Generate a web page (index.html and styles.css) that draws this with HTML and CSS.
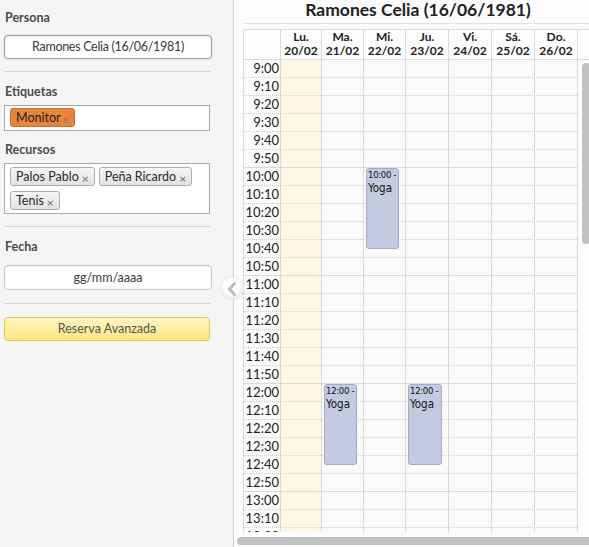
FILE: index.html
```html
<!DOCTYPE html>
<html lang="es">
<head>
<meta charset="utf-8">
<title>Reservas</title>
<link rel="stylesheet" href="styles.css">
</head>
<body>
<div class="app">
  <aside class="sidebar">
    <div class="label">Persona</div>
    <div class="input input-persona">Ramones Celia (16/06/1981)</div>
    <div class="divider"></div>
    <div class="label label-sec">Etiquetas</div>
    <div class="tagbox tagbox-one">
      <span class="tag tag-orange">Monitor<span class="x">×</span></span>
    </div>
    <div class="label label-rec">Recursos</div>
    <div class="tagbox tagbox-two">
      <span class="tag">Palos Pablo<span class="x">×</span></span>
      <span class="tag">Peña Ricardo<span class="x">×</span></span>
      <span class="tag">Tenis<span class="x">×</span></span>
    </div>
    <div class="divider"></div>
    <div class="label label-sec">Fecha</div>
    <div class="input input-fecha">gg/mm/aaaa</div>
    <div class="divider divider-last"></div>
    <div class="button">Reserva Avanzada</div>
    <div class="collapse"><svg width="12" height="14" viewBox="0 0 12 14"><path d="M8.5 1.5 L3.5 7 L8.5 12.5" fill="none" stroke="#bdbdbd" stroke-width="3" stroke-linecap="round" stroke-linejoin="round"/></svg></div>
  </aside>
  <main class="cal">
    <div class="cal-title">Ramones Celia (16/06/1981)</div>
    <div class="scroll">
      <div class="table">
        <div class="thead">
          <div class="th th-time"></div>
          <div class="th w41">Lu.<br>20/02</div>
          <div class="th w42">Ma.<br>21/02</div>
          <div class="th w42">Mi.<br>22/02</div>
          <div class="th w43">Ju.<br>23/02</div>
          <div class="th w43">Vi.<br>24/02</div>
          <div class="th w43">Sá.<br>25/02</div>
          <div class="th w43">Do.<br>26/02</div>
          <div class="th th-gutter"></div>
        </div>
        <div class="tbody">
          <div class="layer cols">
            <div class="col col-time"></div>
            <div class="col w41 today"></div>
            <div class="col w42">
              <div class="event ev-12"><span class="ev-time">12:00 -</span><span class="ev-name">Yoga</span></div>
            </div>
            <div class="col w42">
              <div class="event ev-10"><span class="ev-time">10:00 -</span><span class="ev-name">Yoga</span></div>
            </div>
            <div class="col w43">
              <div class="event ev-12 ev-wide"><span class="ev-time">12:00 -</span><span class="ev-name">Yoga</span></div>
            </div>
            <div class="col w43"></div>
            <div class="col w43"></div>
            <div class="col w43"></div>
            <div class="gutter"><div class="vthumb"></div></div>
          </div>
          <div class="layer rows">
            <div class="row"><span class="t">9:00</span></div>
            <div class="row"><span class="t">9:10</span></div>
            <div class="row"><span class="t">9:20</span></div>
            <div class="row"><span class="t">9:30</span></div>
            <div class="row"><span class="t">9:40</span></div>
            <div class="row hour"><span class="t">9:50</span></div>
            <div class="row"><span class="t">10:00</span></div>
            <div class="row"><span class="t">10:10</span></div>
            <div class="row"><span class="t">10:20</span></div>
            <div class="row"><span class="t">10:30</span></div>
            <div class="row"><span class="t">10:40</span></div>
            <div class="row hour"><span class="t">10:50</span></div>
            <div class="row"><span class="t">11:00</span></div>
            <div class="row"><span class="t">11:10</span></div>
            <div class="row"><span class="t">11:20</span></div>
            <div class="row"><span class="t">11:30</span></div>
            <div class="row"><span class="t">11:40</span></div>
            <div class="row hour"><span class="t">11:50</span></div>
            <div class="row"><span class="t">12:00</span></div>
            <div class="row"><span class="t">12:10</span></div>
            <div class="row"><span class="t">12:20</span></div>
            <div class="row"><span class="t">12:30</span></div>
            <div class="row"><span class="t">12:40</span></div>
            <div class="row hour"><span class="t">12:50</span></div>
            <div class="row"><span class="t">13:00</span></div>
            <div class="row"><span class="t">13:10</span></div>
            <div class="row"><span class="t">13:20</span></div>
          </div>
        </div>
      </div>
      <div class="hscroll"><div class="hthumb"></div></div>
    </div>
  </main>
</div>
</body>
</html>
```
FILE: styles.css
```css
html, body {
  margin: 0;
  padding: 0;
}
body {
  font-family: Lato, "Open Sans", sans-serif;
  font-size: 12px;
  color: #333;
  background: #fcfcfc;
}
.app {
  display: flex;
  width: 589px;
  height: 547px;
  overflow: hidden;
}

/* Sidebar */
.sidebar {
  position: relative;
  width: 229px;
  flex: none;
  background: #f5f5f5;
  border-right: 1px solid #cfcfcf;
  padding: 10px 0 0 4px;
  box-sizing: content-box;
}
.sidebar > * { box-sizing: border-box; }
.label {
  font-weight: bold;
  color: #4c4c4c;
  font-size: 12.5px;
  line-height: 16px;
  padding-left: 1px;
  height: 16px;
}
.label-sec { margin-top: 12px; }
.label-rec { margin-top: 11px; }
.input {
  background: #fff;
  border: 1px solid #b4b4b4;
  border-radius: 4px;
  text-align: center;
  color: #3a3a3a;
  font-size: 12.5px;
  letter-spacing: -0.3px;
  width: 208px;
  box-shadow: inset 0 1px 2px rgba(0,0,0,0.08);
}
.input-persona {
  margin-top: 9px;
  height: 24px;
  line-height: 22px;
  border-color: #9da3a8;
  box-shadow: 0 0 2px rgba(90,100,110,0.35), inset 0 1px 2px rgba(0,0,0,0.08);
}
.input-fecha {
  margin-top: 10px;
  height: 25px;
  line-height: 23px;
  border-color: #c6c6c6;
  letter-spacing: 0;
}
.divider {
  width: 206px;
  height: 1px;
  background: #d6d6d6;
  margin-top: 12px;
}
.divider-last { margin-top: 13px; }
.tagbox {
  margin-top: 5px;
  width: 206px;
  background: #fff;
  border: 1px solid #a9a9a9;
  padding: 2px 4px 0 5px;
  display: flex;
  flex-wrap: wrap;
  gap: 5px 4px;
  align-content: flex-start;
}
.tagbox-one { height: 26px; }
.tagbox-two { height: 51px; padding-top: 3px; }
.tag {
  display: inline-flex;
  align-items: center;
  height: 19px;
  padding: 0 5px 0 5px;
  border: 1px solid #adadad;
  border-radius: 3px;
  background: linear-gradient(#f6f6f6, #e2e2e2);
  color: #2a2a2a;
  font-size: 12.5px;
  box-sizing: border-box;
}
.tag-orange {
  background: #ea843c;
  border-color: #c5702f;
  color: #1e1e1e;
  padding-right: 4px;
}
.x {
  font-size: 12px;
  font-weight: bold;
  color: #858585;
  margin-left: 3px;
  line-height: 1;
  position: relative;
  top: 2px;
}
.tag-orange .x { color: #9a7e6a; margin-left: 2px; }
.button {
  margin-top: 13px;
  width: 206px;
  height: 24px;
  line-height: 22px;
  text-align: center;
  border: 1px solid #ecc64f;
  border-radius: 4px;
  background: linear-gradient(#fff5c2, #fde57f);
  color: #555;
  font-size: 12.5px;
}
.collapse {
  position: absolute;
  left: 221px;
  top: 277px;
  width: 23px;
  height: 23px;
  border-radius: 50%;
  background: radial-gradient(circle at 45% 40%, #ffffff 35%, #e6e6e6 80%, #d2d2d2 100%);
  box-shadow: 0 0 1px rgba(0,0,0,0.25);
  display: flex;
  align-items: center;
  justify-content: center;
  z-index: 5;
}
.collapse svg { margin-left: -2px; }

/* Calendar */
.cal {
  flex: 1;
  display: flex;
  flex-direction: column;
  min-width: 0;
  background: #fcfcfc;
}
.cal-title {
  margin-left: 9px;
  height: 24px;
  box-sizing: border-box;
  border-bottom: 1px solid #e4e4e4;
  text-align: center;
  font-weight: bold;
  font-size: 17.5px;
  line-height: 20px;
  color: #222;
  padding-left: 4px;
  flex: none;
}
.scroll {
  margin-top: 5px;
  flex: 1;
  display: flex;
  flex-direction: column;
  min-height: 0;
}
.table {
  margin-left: 9px;
  flex: 1;
  display: flex;
  flex-direction: column;
  min-height: 0;
  overflow: hidden;
  border-top: 1px solid #dadada;
}
.thead {
  display: flex;
  height: 29px;
  flex: none;
  border-bottom: 1px solid #dadada;
  background: #fcfcfc;
}
.th {
  box-sizing: border-box;
  border-right: 1px solid #dadada;
  text-align: center;
  font-weight: bold;
  font-size: 12px;
  line-height: 14px;
  padding-top: 0;
  color: #222;
}
.th-time { width: 38px; border-left: 1px solid #dadada; }
.th-gutter { flex: 1; border-right: none; }
.w41 { width: 41px; }
.w42 { width: 42px; }
.w43 { width: 43px; }

.tbody {
  flex: 1;
  min-height: 0;
  display: grid;
  overflow: hidden;
  background: #fafafa;
}
.layer { grid-area: 1 / 1; }
.cols { display: flex; }
.col {
  box-sizing: border-box;
  border-right: 1px solid #dadada;
  display: flex;
  flex-direction: column;
  align-items: flex-start;
}
.col-time { width: 38px; border-left: 1px solid #dadada; }
.today { background: #fdf7e4; }
.gutter {
  flex: 1;
  background: #fcfcfc;
  position: relative;
  z-index: 3;
}
.vthumb {
  margin-top: 3px;
  margin-left: 4px;
  width: 8px;
  height: 181px;
  border-radius: 4px;
  background: #c2c2c2;
}
.rows { display: flex; flex-direction: column; }
.row {
  height: 18px;
  flex: none;
  box-sizing: border-box;
  border-bottom: 1px dotted #cfcfcf;
  margin-right: 11px;
  display: flex;
  align-items: center;
}
.row.hour { border-bottom: 1px solid #dadada; }
.t {
  width: 36px;
  text-align: right;
  font-size: 13px;
  color: #222;
  line-height: 17px;
}
.event {
  position: relative;
  z-index: 2;
  margin-left: 2px;
  width: 33px;
  height: 81px;
  box-sizing: border-box;
  background: #c4cbe1;
  border: 1px solid #a2acc9;
  border-radius: 3px;
  padding: 0 0 0 1px;
  overflow: hidden;
  display: flex;
  flex-direction: column;
  white-space: nowrap;
  font-family: "DejaVu Sans Condensed", "DejaVu Sans", Verdana, sans-serif;
  font-stretch: condensed;
  color: #111;
}
.ev-wide { width: 34px; }
.ev-10 { margin-top: 108px; }
.ev-12 { margin-top: 324px; }
.ev-time { font-size: 9.5px; line-height: 12px; letter-spacing: -0.3px; }
.ev-name { font-size: 11.5px; line-height: 15px; }
.hscroll {
  height: 15px;
  flex: none;
  box-sizing: border-box;
  padding: 5px 0 0 3px;
  background: #fcfcfc;
}
.hthumb {
  height: 8px;
  border-radius: 4px 0 0 4px;
  background: #c2c2c2;
}
```
